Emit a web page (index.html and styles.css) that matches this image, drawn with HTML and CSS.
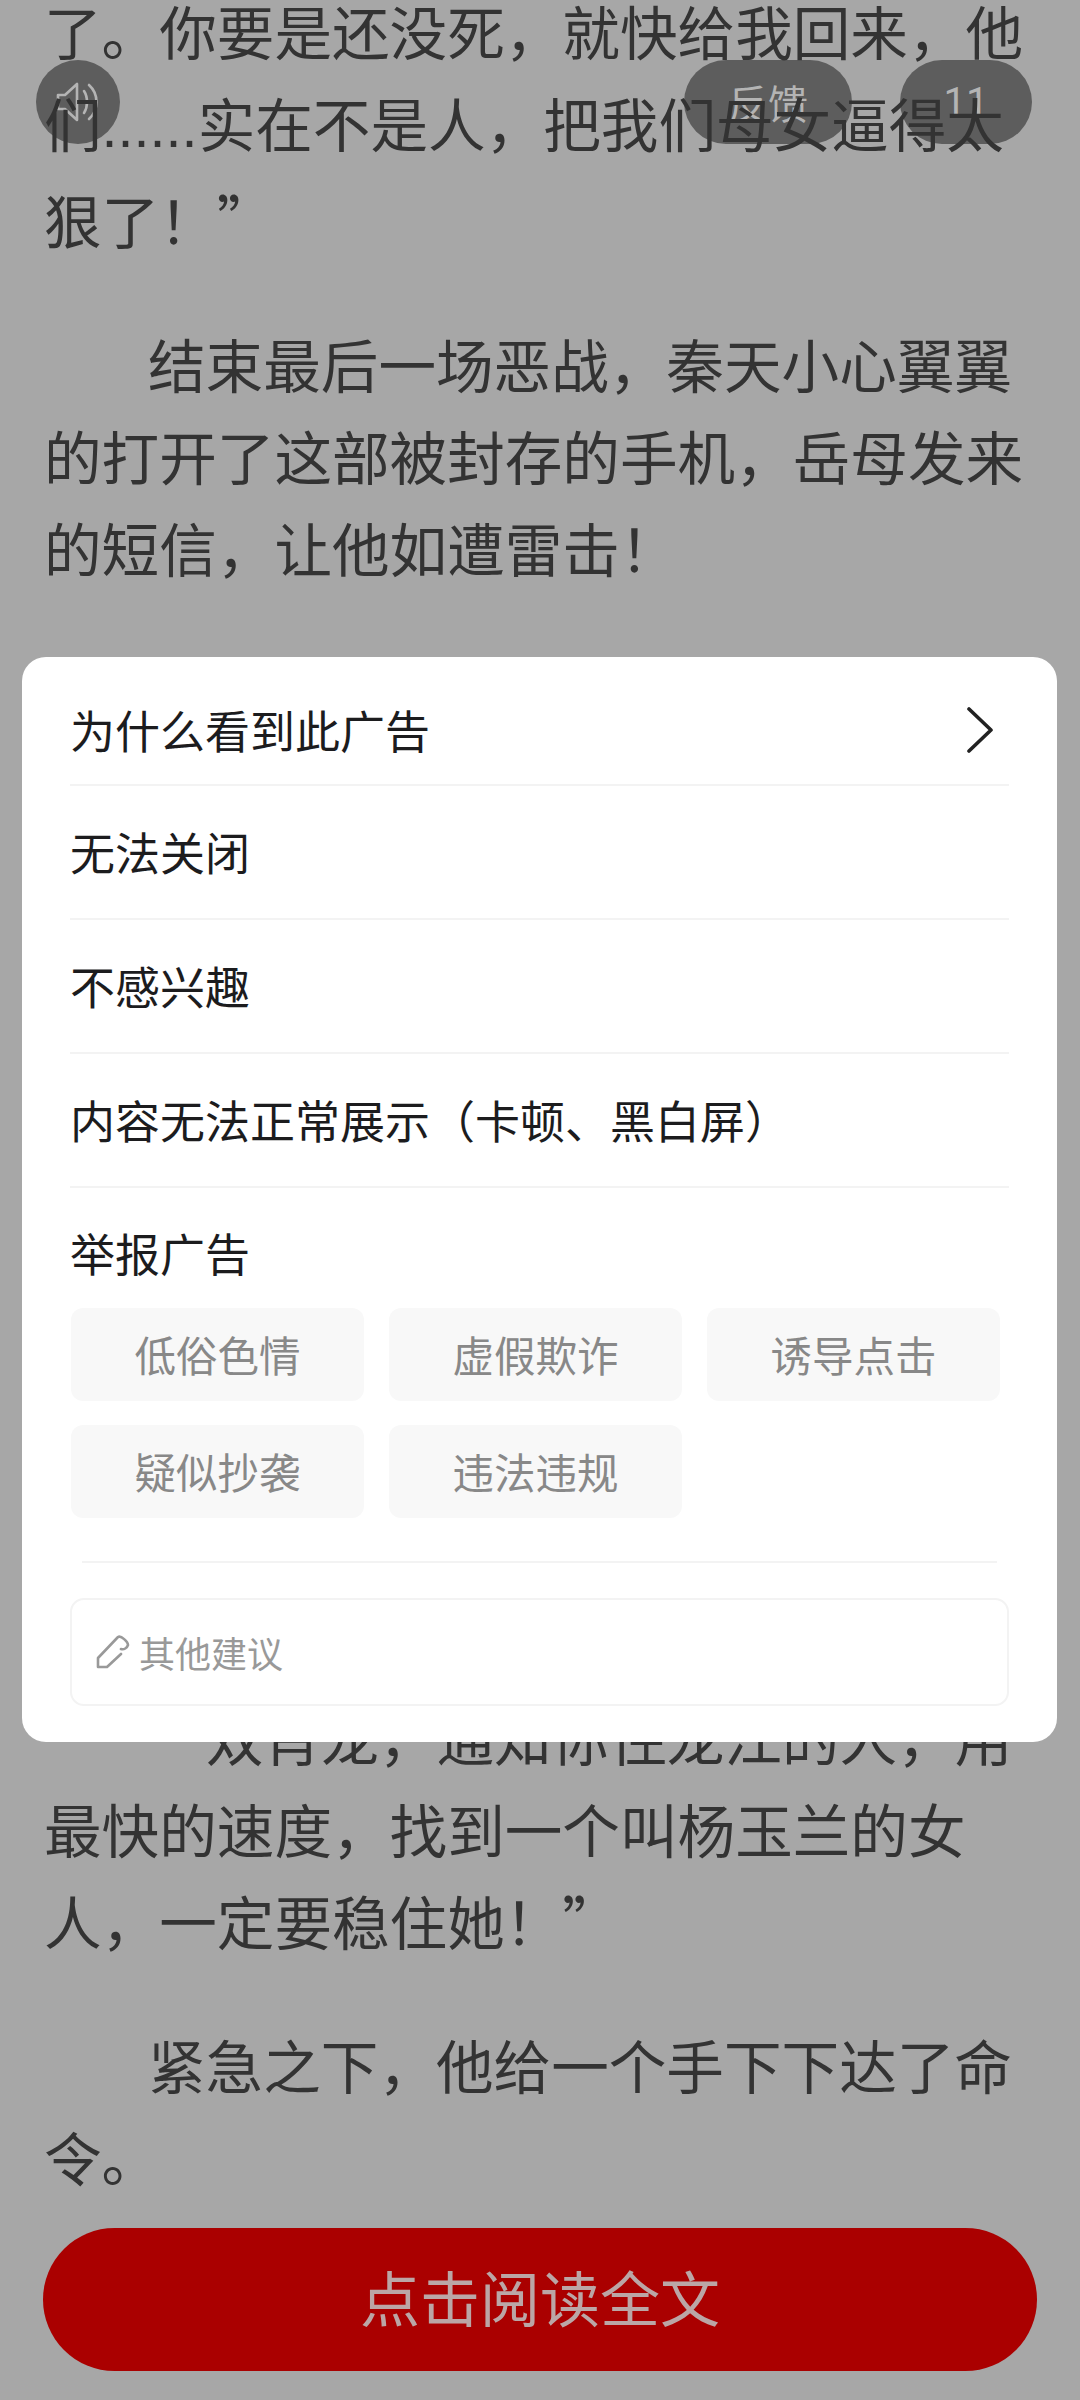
FILE: index.html
```html
<!DOCTYPE html>
<html lang="zh-CN">
<head>
  <meta charset="UTF-8">
  <meta name="viewport" content="width=device-width, initial-scale=1.0">
  <title>阅读</title>
  <link rel="stylesheet" href="styles.css">
</head>
<body>
  <div class="page">
    <!-- Floating controls, the article text runs over them -->
    <div class="top-controls">
      <div class="pill pill-sound">
        <svg class="sound-icon" viewBox="0 0 44 40" fill="none" stroke="currentColor" stroke-width="2.6" stroke-linejoin="round" stroke-linecap="round">
          <path d="M2 13h7L21 2v36L9 27H2z"/>
          <path d="M28 9c4 6 4 16 0 22"/>
          <path d="M33 3c10 9 10 25 0 34"/>
        </svg>
      </div>
      <div class="pill-group">
        <div class="pill pill-feedback">反馈</div>
        <div class="pill pill-count">11</div>
      </div>
    </div>

    <!-- Article text -->
    <article class="article">
      <p class="para-open">了。你要是还没死，就快给我回来，他们<span class="dots">......</span>实在不是人，把我们母女逼得太狠了！”</p>
      <p>结束最后一场恶战，秦天小心翼翼的打开了这部被封存的手机，岳母发来的短信，让他如遭雷击！</p>
      <div class="covered"></div>
      <p class="para-deep">双肖龙，通知你住龙江的人，用最快的速度，找到一个叫杨玉兰的女人，一定要稳住她！”</p>
      <p>紧急之下，他给一个手下下达了命令。</p>
    </article>

    <a class="read-all">点击阅读全文</a>

    <!-- Dialog -->
    <div class="dialog">
      <div class="row row-first">
        <span>为什么看到此广告</span>
        <svg class="chevron" viewBox="0 0 26 46" fill="none" stroke="currentColor" stroke-width="3.6" stroke-linecap="round" stroke-linejoin="round">
          <path d="M2 2l22 21L2 44"/>
        </svg>
      </div>
      <div class="row">无法关闭</div>
      <div class="row">不感兴趣</div>
      <div class="row">内容无法正常展示（卡顿、黑白屏）</div>
      <div class="report-title">举报广告</div>
      <div class="tags">
        <div class="tag">低俗色情</div>
        <div class="tag">虚假欺诈</div>
        <div class="tag">诱导点击</div>
        <div class="tag">疑似抄袭</div>
        <div class="tag">违法违规</div>
      </div>
      <div class="dialog-line"></div>
      <div class="suggest">
        <svg class="pencil" viewBox="0 0 34 34" fill="none" stroke="currentColor" stroke-width="2.6" stroke-linejoin="round" stroke-linecap="round">
          <path d="M25 14c3 1 6-1 7-4 0-3-7-10-10-8L2 23v9h9l14-13"/>
        </svg>
        <span>其他建议</span>
      </div>
    </div>
  </div>
</body>
</html>
```

FILE: styles.css
```css
/* General Styles */
* {
  box-sizing: border-box;
}

body {
  margin: 0;
  font-family: "Noto Sans CJK SC", "Noto Sans", sans-serif;
}

.page {
  position: relative;
  width: 1080px;
  height: 2400px;
  overflow: hidden;
  background: #a7a7a7;
}

/* Article */
.article {
  position: relative;
  margin-top: -16px;
  padding: 0 45px 0 44px;
  font-size: 57.6px;
  line-height: 92px;
  color: #333;
}

.article p {
  margin: 0 0 52px;
  text-indent: 104px;
}

.article .para-open {
  text-indent: 0;
}

.article .para-deep {
  text-indent: 162px;
}

.dots {
  font-family: "Liberation Sans", sans-serif;
}

.covered {
  height: 1045px;
}

/* Floating controls */
.top-controls {
  position: absolute;
  top: 60px;
  left: 36px;
  right: 48px;
  display: flex;
  justify-content: space-between;
}

.pill-group {
  display: flex;
  gap: 48px;
}

.pill {
  height: 84px;
  border-radius: 42px;
  background: #5d5d5d;
  color: #b4b4b4;
  font-size: 40px;
  display: flex;
  align-items: center;
  justify-content: center;
}

.pill-sound {
  width: 84px;
}

.sound-icon {
  width: 44px;
  height: 40px;
}

.pill-feedback {
  width: 168px;
}

.pill-count {
  width: 132px;
  font-family: Roboto, sans-serif;
}

.read-all {
  position: absolute;
  left: 43px;
  top: 2228px;
  width: 994px;
  height: 143px;
  padding-bottom: 9px;
  border-radius: 72px;
  background: #aa0000;
  color: #bba6a6;
  font-size: 60px;
  display: flex;
  align-items: center;
  justify-content: center;
}

/* Dialog */
.dialog {
  position: absolute;
  left: 22px;
  top: 657px;
  width: 1035px;
  height: 1085px;
  padding: 0 48px;
  background: #fff;
  border-radius: 24px;
  color: #1c1c1e;
  font-size: 45px;
}

.row {
  height: 134px;
  padding-bottom: 2px;
  display: flex;
  align-items: center;
  justify-content: space-between;
  border-bottom: 2px solid #f3f3f3;
}

.row-first {
  height: 129px;
  padding-top: 20px;
}

.chevron {
  width: 26px;
  height: 46px;
  margin-right: 16px;
  color: #222;
}

.report-title {
  height: 120px;
  line-height: 130px;
}

.tags {
  display: grid;
  grid-template-columns: repeat(3, 293px);
  gap: 24px 25px;
  margin-left: 1px;
}

.tag {
  height: 93px;
  padding-bottom: 2px;
  border-radius: 12px;
  background: #f8f8f8;
  color: #888;
  font-size: 41.5px;
  display: flex;
  align-items: center;
  justify-content: center;
}

.dialog-line {
  height: 2px;
  margin: 43px 12px 35px 12px;
  background: #f3f3f3;
}

.suggest {
  height: 108px;
  padding-left: 24px;
  border: 2px solid #f3f3f3;
  border-radius: 14px;
  color: #999;
  font-size: 36px;
  display: flex;
  align-items: center;
  gap: 9px;
}

.pencil {
  width: 34px;
  height: 34px;
}
```
